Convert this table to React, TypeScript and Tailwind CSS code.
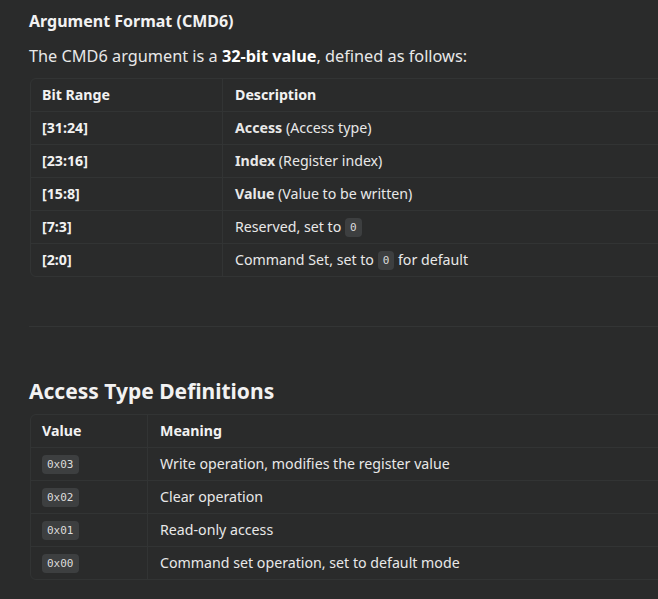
const font = { fontFamily: '"Noto Sans", "Open Sans", sans-serif' };

const bitRows = [
  { range: "[31:24]", desc: <><b className="font-bold">Access</b> (Access type)</> },
  { range: "[23:16]", desc: <><b className="font-bold">Index</b> (Register index)</> },
  { range: "[15:8]", desc: <><b className="font-bold">Value</b> (Value to be written)</> },
  { range: "[7:3]", desc: <>Reserved, set to <Code>0</Code></> },
  { range: "[2:0]", desc: <>Command Set, set to <Code>0</Code> for default</> },
];

const accessRows = [
  { value: "0x03", meaning: "Write operation, modifies the register value" },
  { value: "0x02", meaning: "Clear operation" },
  { value: "0x01", meaning: "Read-only access" },
  { value: "0x00", meaning: "Command set operation, set to default mode" },
];

function Code({ children }: { children: React.ReactNode }) {
  return (
    <code className="inline-block rounded-[4px] bg-[#3d3f40] px-[5px] font-['DejaVu_Sans_Mono',monospace] text-[11px] leading-[19px] text-[#dcdcdc] align-middle">
      {children}
    </code>
  );
}

export default function App() {
  return (
    <div className="w-[658px] h-[599px] overflow-hidden bg-[#2a2b2b] text-[#e8e8e8]" style={font}>
      <div className="pl-[29px] pt-[9px]">
        <h3 className="text-[16px] leading-[24px] font-bold text-[#f2f2f2]">Argument Format (CMD6)</h3>
        <p className="mt-[11px] text-[16.3px] leading-[24px]">
          The CMD6 argument is a <b className="font-bold text-white">32-bit value</b>, defined as follows:
        </p>

        <div className="mt-[10px] ml-px w-[700px] rounded-md border border-[#323434] text-[14.2px]">
          <div className="grid grid-cols-[192px_1fr] h-[32px] font-bold text-[#f2f2f2]">
            <div className="flex items-center px-[11px] border-r border-[#323434]">Bit Range</div>
            <div className="flex items-center px-[12px]">Description</div>
          </div>
          {bitRows.map((r) => (
            <div key={r.range} className="grid grid-cols-[192px_1fr] h-[33px] border-t border-[#323434]">
              <div className="flex items-center px-[11px] border-r border-[#323434] font-bold text-[#f2f2f2]">{r.range}</div>
              <div className="flex items-center px-[12px] whitespace-pre">{r.desc}</div>
            </div>
          ))}
        </div>

        <div className="mt-[49px] h-px bg-[#333535]" />

        <h2 className="mt-[49px] text-[21px] leading-[30px] font-bold text-[#f2f2f2]">Access Type Definitions</h2>

        <div className="mt-[8px] ml-px w-[700px] rounded-md border border-[#323434] text-[14.2px]">
          <div className="grid grid-cols-[117px_1fr] h-[32px] font-bold text-[#f2f2f2]">
            <div className="flex items-center px-[11px] border-r border-[#323434]">Value</div>
            <div className="flex items-center px-[12px]">Meaning</div>
          </div>
          {accessRows.map((r) => (
            <div key={r.value} className="grid grid-cols-[117px_1fr] h-[33px] border-t border-[#323434]">
              <div className="flex items-center px-[11px] border-r border-[#323434]">
                <Code>{r.value}</Code>
              </div>
              <div className="flex items-center px-[12px]">{r.meaning}</div>
            </div>
          ))}
        </div>
      </div>
    </div>
  );
}
